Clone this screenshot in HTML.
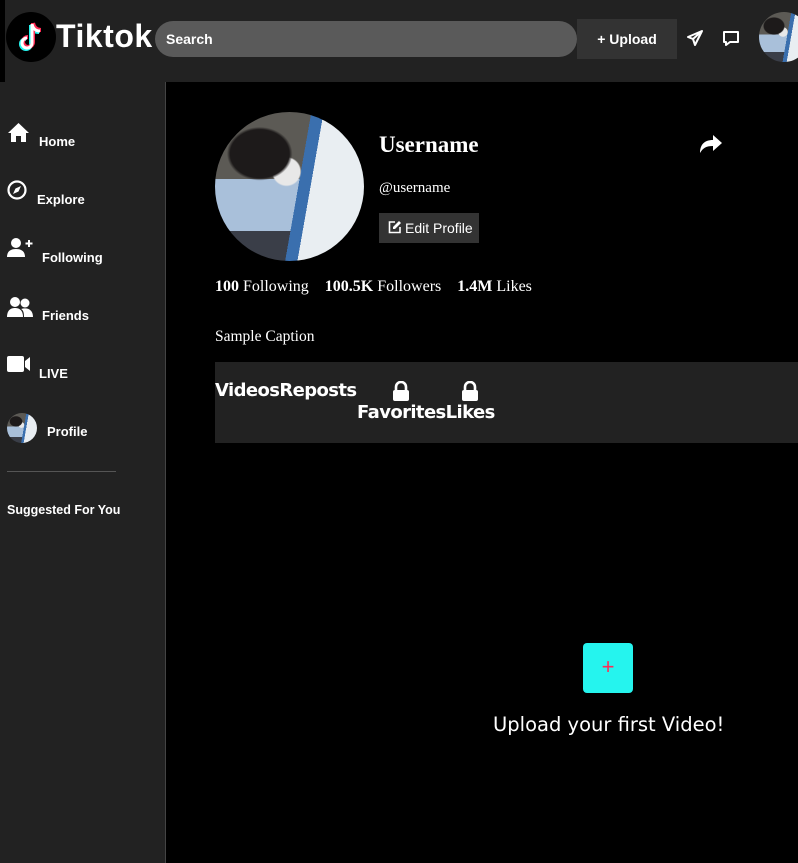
<!DOCTYPE html>
<html><head><style>
*{margin:0;padding:0;box-sizing:border-box}
body{width:798px;height:863px;background:#000;color:#fff;font-family:"Liberation Sans",sans-serif;position:relative;overflow:hidden}
.abs{position:absolute}
.hdr{left:5px;top:0;width:793px;height:82px;background:#222}
.av{border-radius:50%;overflow:hidden;background:
radial-gradient(ellipse 22% 18% at 30% 28%,#1d1a1a 90%,transparent 100%),
radial-gradient(ellipse 10% 10% at 48% 40%,#e8e8e8 90%,transparent 100%),
linear-gradient(100deg,transparent 0 55%,#3a6fae 55% 62%,#e9eef2 62% 100%),
linear-gradient(180deg,#5c5a55 0 45%,#a9c0da 45% 80%,#3a3e48 80%)}
.nav{left:0;top:82px;width:166px;height:781px;background:#222;border-right:1px solid #444}
.item{position:absolute;font-size:13px;font-weight:600}
.serif{font-family:"Liberation Serif",serif}
</style></head><body>
<div class="abs hdr"></div>
<div class="abs" style="left:6px;top:12px;width:50px;height:50px;border-radius:50%;background:#000"></div>
<svg class="abs" style="left:15px;top:20px" width="32" height="34" viewBox="0 0 32 34"><path d="M17 4v19a5 5 0 1 1-5-5M17 4c1 5 4 7 8 7" fill="none" stroke="#25f4ee" stroke-width="4" transform="translate(-1,1)"/><path d="M17 4v19a5 5 0 1 1-5-5M17 4c1 5 4 7 8 7" fill="none" stroke="#fe2c55" stroke-width="4" transform="translate(1,-1)"/><path d="M17 4v19a5 5 0 1 1-5-5M17 4c1 5 4 7 8 7" fill="none" stroke="#fff" stroke-width="3"/></svg>
<div class="abs" style="left:56px;top:18px;font-size:32px;font-weight:bold;letter-spacing:0.5px">Tiktok</div>
<div class="abs" style="left:155px;top:21px;width:422px;height:36px;border-radius:18px;background:#5a5a5a;font-size:14px;font-weight:bold;padding:10px 0 0 11px">Search</div>
<div class="abs" style="left:577px;top:19px;width:100px;height:40px;background:#333;font-size:14px;font-weight:bold;text-align:center;line-height:40px">+ Upload</div>
<svg class="abs" style="left:686px;top:29px" width="18" height="18" viewBox="0 0 18 18"><path d="M16 2 2 8l5 2 2 6zM7 10l9-8" fill="none" stroke="#fff" stroke-width="2" stroke-linejoin="round"/></svg>
<svg class="abs" style="left:722px;top:30px" width="18" height="17" viewBox="0 0 18 17"><path d="M2 2h14v10H8l-4 3v-3H2z" fill="none" stroke="#fff" stroke-width="2" stroke-linejoin="round"/></svg>
<div class="abs av" style="left:759px;top:12px;width:50px;height:50px"></div>
<div class="abs nav"></div>
<svg class="abs" style="left:7px;top:122px" width="23" height="21" viewBox="0 0 23 21"><path d="M11.5 1 1 11h3v9h5v-6h5v6h5v-9h3z" fill="#fff"/></svg>
<div class="item" style="left:39px;top:134px">Home</div>
<svg class="abs" style="left:7px;top:180px" width="20" height="20" viewBox="0 0 20 20"><circle cx="10" cy="10" r="8.5" fill="none" stroke="#fff" stroke-width="2.2"/><path d="M14 6 11.5 11.5 6 14 8.5 8.5z" fill="#fff"/></svg>
<div class="item" style="left:37px;top:192px">Explore</div>
<svg class="abs" style="left:7px;top:237px" width="26" height="21" viewBox="0 0 26 21"><circle cx="9" cy="6" r="5" fill="#fff"/><path d="M0 20c0-6 4-8 9-8s9 2 9 8z" fill="#fff"/><path d="M22 3v7M18.5 6.5h7" stroke="#fff" stroke-width="2"/></svg>
<div class="item" style="left:42px;top:250px">Following</div>
<svg class="abs" style="left:7px;top:296px" width="27" height="22" viewBox="0 0 27 22"><circle cx="8" cy="6" r="5" fill="#fff"/><circle cx="18" cy="7" r="4.5" fill="#fff"/><path d="M0 21c0-7 4-9 8-9s8 2 8 9z" fill="#fff"/><path d="M17 21c0-5-1-7-3-8 7-2 12 1 12 8z" fill="#fff"/></svg>
<div class="item" style="left:42px;top:308px">Friends</div>
<svg class="abs" style="left:7px;top:356px" width="24" height="16" viewBox="0 0 24 16"><rect x="0" y="0" width="17" height="16" rx="2" fill="#fff"/><path d="M18 5 23 1v14l-5-4z" fill="#fff"/></svg>
<div class="item" style="left:39px;top:366px">LIVE</div>
<div class="abs av" style="left:7px;top:413px;width:30px;height:30px"></div>
<div class="item" style="left:47px;top:424px">Profile</div>
<div class="abs" style="left:7px;top:471px;width:109px;height:1px;background:#555"></div>
<div class="item" style="left:7px;top:503px;font-size:12.5px">Suggested For You</div>
<div class="abs av" style="left:215px;top:112px;width:149px;height:149px"></div>
<div class="abs serif" style="left:379px;top:132px;font-size:23px;font-weight:bold">Username</div>
<svg class="abs" style="left:699px;top:134px" width="24" height="20" viewBox="0 0 24 20"><path d="M14 1l9 8-9 8v-5C7 12 4 14 1 19 1 11 5 6 14 6z" fill="#fff"/></svg>
<div class="abs serif" style="left:379px;top:180px;font-size:15px">@username</div>
<div class="abs" style="left:379px;top:213px;width:100px;height:30px;background:#333;font-size:14px;line-height:30px;padding-left:26px">Edit Profile</div>
<svg class="abs" style="left:388px;top:220px" width="14" height="14" viewBox="0 0 14 14"><path d="M7 2H1.5v10.5H12V7" fill="none" stroke="#fff" stroke-width="1.6"/><path d="M11 1l2 2-6 6H5V7z" fill="#fff"/></svg>
<div class="abs serif" style="left:215px;top:278px;font-size:16px;white-space:pre"><b>100</b> Following    <b>100.5K</b> Followers    <b>1.4M</b> Likes</div>
<div class="abs serif" style="left:215px;top:328px;font-size:15.5px">Sample Caption</div>
<div class="abs" style="left:215px;top:362px;width:583px;height:81px;background:#222"></div>
<div class="abs" style="left:215px;top:380px;font-size:18px;font-weight:bold;font-family:'DejaVu Sans',sans-serif;letter-spacing:-0.6px">VideosReposts</div>
<div class="abs" style="left:357px;top:402px;font-size:18px;font-weight:bold;font-family:'DejaVu Sans',sans-serif;letter-spacing:-0.6px">FavoritesLikes</div>
<svg class="abs" style="left:392px;top:381px" width="18" height="20" viewBox="0 0 18 20"><path d="M4 9V6a5 5 0 0 1 10 0v3" fill="none" stroke="#fff" stroke-width="2.6"/><rect x="1" y="9" width="16" height="11" rx="2" fill="#fff"/></svg>
<svg class="abs" style="left:461px;top:381px" width="18" height="20" viewBox="0 0 18 20"><path d="M4 9V6a5 5 0 0 1 10 0v3" fill="none" stroke="#fff" stroke-width="2.6"/><rect x="1" y="9" width="16" height="11" rx="2" fill="#fff"/></svg>
<div class="abs" style="left:583px;top:643px;width:50px;height:50px;border-radius:4px;background:#25f4ee;color:#fe2c55;font-size:22px;text-align:center;line-height:48px">+</div>
<div class="abs" style="left:493px;top:713px;font-size:19.5px;font-family:'DejaVu Sans',sans-serif">Upload your first Video!</div>
</body></html>
